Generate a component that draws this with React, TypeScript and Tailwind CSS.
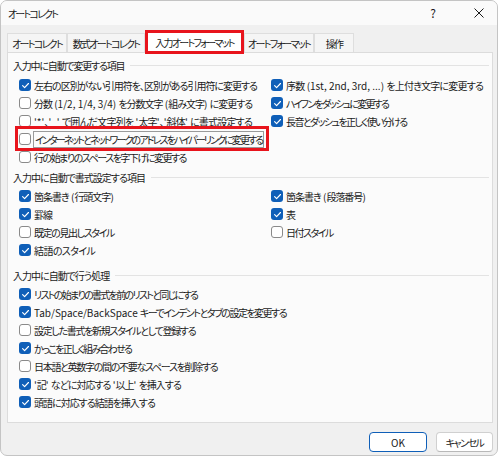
import type { ReactNode } from 'react'

const font = {
  fontFamily: '"Noto Sans CJK JP", "Noto Sans", sans-serif',
  fontFeatureSettings: '"palt"',
}

function Check({ checked }: { checked: boolean }) {
  return checked ? (
    <span className="w-[12px] h-[12px] rounded-[3px] bg-[#0f5fb8] flex items-center justify-center shrink-0">
      <svg width="9" height="9" viewBox="0 0 10 10" fill="none">
        <path d="M1.8 5.2 L4 7.3 L8.3 2.8" stroke="white" strokeWidth="1.3" strokeLinecap="round" strokeLinejoin="round" />
      </svg>
    </span>
  ) : (
    <span className="w-[12px] h-[12px] rounded-[3px] bg-white border border-[#8a8a8a] shrink-0" />
  )
}

// latin runs keep their normal spacing
function L({ children }: { children: ReactNode }) {
  return <span className="tracking-[0px]">{children}</span>
}

function Item({
  checked,
  children,
  focus,
  t = 'tracking-[-1px]',
}: {
  checked: boolean
  children: ReactNode
  focus?: boolean
  t?: string
}) {
  return (
    <div className="h-[18px] flex items-center gap-[2px] pl-[6px] whitespace-nowrap">
      <Check checked={checked} />
      <span className={`${t} ${focus ? 'border border-[#9a9a9a] px-[1px] leading-[15px]' : 'px-[1px]'}`}>
        {children}
      </span>
    </div>
  )
}

function Heading({ children, t = 'tracking-[-1px]' }: { children: ReactNode; t?: string }) {
  return (
    <div className="h-[16px] flex items-center gap-[6px] whitespace-nowrap">
      <span className={t}>{children}</span>
      <span className="flex-1 h-px bg-[#e3e3e3] mr-[3px]" />
    </div>
  )
}

const tabs = [
  { label: 'オートコレクト', w: 'w-[60px]' },
  { label: '数式オートコレクト', w: 'w-[78px]' },
  { label: '入力オートフォーマット', w: 'w-[99px]', active: true },
  { label: 'オートフォーマット', w: 'w-[70px]' },
  { label: '操作', w: 'w-[40px]' },
]

export default function App() {
  return (
    <div className="w-[500px] h-[457px] bg-white text-[10px] text-[#1a1a1a]" style={font}>
      <div className="w-[498px] h-[456px] border border-[#c4c4c4] rounded-[7px] overflow-hidden flex flex-col bg-[#f0f0f0]">
        <div className="h-[24px] bg-[#fafafa] flex items-center pl-[7px] shrink-0">
          <span className="tracking-[-1.8px]">オートコレクト</span>
          <span className="ml-auto mr-[38px] text-[12px]">?</span>
          <svg width="10" height="10" viewBox="0 0 10 10" className="mr-[13px]">
            <path d="M0.5 0.5 L9.5 9.5 M9.5 0.5 L0.5 9.5" stroke="#1a1a1a" strokeWidth="1" />
          </svg>
        </div>

        <div className="flex items-end h-[27px] pl-[6px] shrink-0 tracking-[-1.7px]">
          {tabs.map((t) =>
            t.active ? (
              <div
                key={t.label}
                className={`${t.w} h-[24px] border-[3px] border-[#e8141c] bg-white flex items-center justify-center relative z-10 -mb-[2px] whitespace-nowrap`}
              >
                {t.label}
              </div>
            ) : (
              <div
                key={t.label}
                className={`${t.w} h-[19px] border border-b-0 border-[#dedede] bg-[#f5f5f5] flex items-center justify-center whitespace-nowrap`}
              >
                {t.label}
              </div>
            ),
          )}
        </div>

        <div className="ml-[6px] w-[486px] h-[371px] border border-[#dcdcdc] bg-[#fbfbfb] pl-[5px] pt-[4px] shrink-0">
          <Heading t="tracking-[-1.2px]">入力中に自動で変更する項目</Heading>
          <div className="mt-[3px] grid grid-cols-[252px_1fr]">
            <Item checked>左右の区別がない引用符を、区別がある引用符に変更する</Item>
            <Item checked t="tracking-[-0.8px]">
              序数<L> (1st, 2nd, 3rd, ...) </L>を上付き文字に変更する
            </Item>
            <Item checked={false}>
              分数<L> (1/2, 1/4, 3/4) </L>を分数文字<L> (</L>組み文字<L>) </L>に変更する
            </Item>
            <Item checked t="tracking-[-1.8px]">
              ハイフンをダッシュに変更する
            </Item>
            <Item checked={false} t="tracking-[-0.8px]">
              <L>'*'</L>、<L>'_' </L>で囲んだ文字列を<L> '</L>太字<L>'</L>、<L>'</L>斜体<L>' </L>に書式設定する
            </Item>
            <Item checked t="tracking-[-1.6px]">
              長音とダッシュを正しく使い分ける
            </Item>
          </div>
          <div className="relative">
            <Item checked={false} focus t="tracking-[-1.9px]">
              インターネットとネットワークのアドレスをハイパーリンクに変更する
            </Item>
            <div className="absolute left-[2px] top-[-4px] w-[254px] h-[25px] border-[3px] border-[#e8141c]" />
          </div>
          <Item checked={false} t="tracking-[-1.5px]">
            行の始まりのスペースを字下げに変更する
          </Item>

          <div className="mt-[3px]">
            <Heading>入力中に自動で書式設定する項目</Heading>
          </div>
          <div className="mt-[2px] grid grid-cols-[252px_1fr]">
            <Item checked>
              箇条書き<L> (</L>行頭文字<L>)</L>
            </Item>
            <Item checked>
              箇条書き<L> (</L>段落番号<L>)</L>
            </Item>
            <Item checked>罫線</Item>
            <Item checked>表</Item>
            <Item checked={false} t="tracking-[-1.4px]">
              既定の見出しスタイル
            </Item>
            <Item checked={false} t="tracking-[-1.5px]">
              日付スタイル
            </Item>
            <Item checked t="tracking-[-0.6px]">
              結語のスタイル
            </Item>
          </div>

          <div className="mt-[8px]">
            <Heading>入力中に自動で行う処理</Heading>
          </div>
          <div className="mt-[2px]">
            <Item checked t="tracking-[-1.7px]">
              リストの始まりの書式を前のリストと同じにする
            </Item>
            <Item checked t="tracking-[-1.5px]">
              <L>Tab/Space/BackSpace </L>キーでインデントとタブの設定を変更する
            </Item>
            <Item checked={false} t="tracking-[-1.3px]">
              設定した書式を新規スタイルとして登録する
            </Item>
            <Item checked t="tracking-[-1.7px]">
              かっこを正しく組み合わせる
            </Item>
            <Item checked={false} t="tracking-[-1.3px]">
              日本語と英数字の間の不要なスペースを削除する
            </Item>
            <Item checked>
              <L>'</L>記<L>' </L>などに対応する<L> '</L>以上<L>' </L>を挿入する
            </Item>
            <Item checked>頭語に対応する結語を挿入する</Item>
          </div>
        </div>

        <div className="flex justify-end gap-[9px] mr-[4px] mt-[9px]">
          <button className="w-[58px] h-[20px] rounded-[4px] bg-white border border-[#0f5fb8] flex items-center justify-center">
            OK
          </button>
          <button className="w-[57px] h-[20px] rounded-[4px] bg-white border border-[#d0d0d0] border-b-[#b8b8b8] flex items-center justify-center tracking-[-1.5px]">
            キャンセル
          </button>
        </div>
      </div>
    </div>
  )
}
